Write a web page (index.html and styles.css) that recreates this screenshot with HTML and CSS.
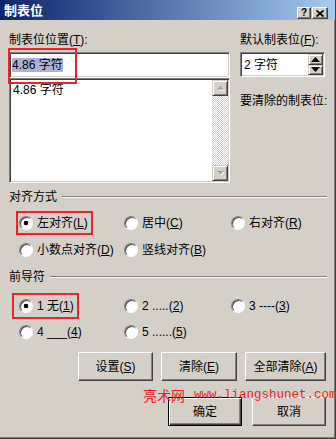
FILE: index.html
```html
<!DOCTYPE html>
<html lang="zh-CN">
<head>
  <meta charset="UTF-8">
  <title>制表位</title>
  <link rel="stylesheet" href="styles.css">
</head>
<body>
  <div class="dialog">
    <div class="titlebar">
      <span class="title">制表位</span>
      <div class="caption">
        <span class="cap-btn help">?</span>
        <span class="cap-btn close">
          <svg width="8" height="7" viewBox="0 0 8 7"><path d="M0.5 0.5 L7.5 6.5 M7.5 0.5 L0.5 6.5" stroke="#000" stroke-width="1.8"/></svg>
        </span>
      </div>
    </div>

    <div class="content">
      <div class="top">
        <div class="col">
          <span class="lbl">制表位位置(<u>T</u>):</span>
          <div class="field tab-pos"><span class="sel">4.86 字符</span></div>
          <div class="listbox">
            <div class="items"><div class="item">4.86 字符</div></div>
            <div class="vscroll">
              <span class="sb-btn"><svg width="9" height="6" viewBox="0 0 9 6"><path d="M4.5 1 L8 4.5 L1 4.5 Z" fill="#fff" transform="translate(1 1)"/><path d="M4.5 1 L8 4.5 L1 4.5 Z" fill="#a0a0a0"/></svg></span>
              <span class="sb-track"></span>
              <span class="sb-btn"><svg width="9" height="6" viewBox="0 0 9 6"><path d="M1 1 L8 1 L4.5 4.5 Z" fill="#fff" transform="translate(1 1)"/><path d="M1 1 L8 1 L4.5 4.5 Z" fill="#a0a0a0"/></svg></span>
            </div>
          </div>
        </div>
        <div class="col">
          <span class="lbl">默认制表位(<u>F</u>):</span>
          <div class="field spin">
            <span class="spin-val">2 字符</span>
            <span class="spin-btns">
              <span class="spin-btn"><svg width="9" height="5" viewBox="0 0 9 5"><path d="M4.5 0 L9 5 L0 5 Z" fill="#000"/></svg></span>
              <span class="spin-btn"><svg width="9" height="5" viewBox="0 0 9 5"><path d="M0 0 L9 0 L4.5 5 Z" fill="#000"/></svg></span>
            </span>
          </div>
          <span class="lbl clear-lbl">要清除的制表位:</span>
        </div>
      </div>

      <div class="group-head first"><span>对齐方式</span></div>
      <div class="radios align">
        <span class="radio checked mark-a">左对齐(<u>L</u>)</span>
        <span class="radio">居中(<u>C</u>)</span>
        <span class="radio">右对齐(<u>R</u>)</span>
        <span class="radio">小数点对齐(<u>D</u>)</span>
        <span class="radio">竖线对齐(<u>B</u>)</span>
      </div>

      <div class="group-head"><span>前导符</span></div>
      <div class="radios leader">
        <span class="radio checked mark-b">1 无(<u>1</u>)</span>
        <span class="radio">2 .....(<u>2</u>)</span>
        <span class="radio">3 ----(<u>3</u>)</span>
        <span class="radio">4 ___(<u>4</u>)</span>
        <span class="radio">5 ......(<u>5</u>)</span>
      </div>

      <div class="btn-row">
        <span class="btn w75">设置(<u>S</u>)</span>
        <span class="btn w76">清除(<u>E</u>)</span>
        <span class="btn w81">全部清除(<u>A</u>)</span>
      </div>
      <div class="btn-row ok-row">
        <span class="btn default">确定</span>
        <span class="btn">取消</span>
      </div>
    </div>

    <div class="watermark"><span class="wm-cn">亮术网</span><span class="wm-url">www.liangshunet.com</span></div>
  </div>
</body>
</html>
```

FILE: styles.css
```css
* { box-sizing: border-box; }
body {
  margin: 0;
  background: #fff;
  font: 12px/14px "Liberation Sans", "Noto Sans CJK SC", sans-serif;
  color: #000;
}
u { text-decoration: underline; text-underline-offset: 1px; }

.dialog {
  position: relative;
  width: 336px;
  height: 439px;
  background: #d4d0c8;
  border-right: 1px solid #404040;
  border-bottom: 1px solid #404040;
  box-shadow: inset -1px -1px #808080;
}

/* title bar */
.titlebar {
  height: 20px;
  display: flex;
  justify-content: space-between;
  padding: 0 7px 0 4px;
  background: linear-gradient(to right, #0a246a, #a6caf0);
}
.title {
  color: #fff;
  font-weight: bold;
  font-size: 13px;
  line-height: 22px;
}
.caption { display: flex; gap: 1px; padding-top: 7px; }
.cap-btn {
  height: 12px;
  display: flex; align-items: center; justify-content: center;
  background: #d4d0c8;
  border: 1px solid; border-color: #fff #404040 #404040 #fff;
  box-shadow: inset -1px -1px #808080;
  font: bold 10px/10px "Liberation Sans", sans-serif;
}
.cap-btn.help { width: 14px; }
.cap-btn.close { width: 16px; }

.content { padding: 13px 8px 0 9px; }

/* top area */
.top {
  display: grid;
  grid-template-columns: 221px 85px;
  column-gap: 10px;
}
.col { display: flex; flex-direction: column; }
.lbl { display: block; height: 14px; white-space: nowrap; }
.field {
  margin-top: 5px;
  background: #fff;
  border: 1px solid; border-color: #808080 #fff #fff #808080;
  box-shadow: inset 1px 1px #404040, inset -1px -1px #d4d0c8;
}
.tab-pos {
  position: relative;
  height: 26px;
  display: flex; align-items: center;
  padding: 0 2px;
}
.tab-pos::after {
  content: "";
  position: absolute;
  left: -2px; top: -5px;
  width: 65px; height: 32px;
  border: 2px solid #e8262a;
}
.sel { background: #aab4d2; }

.listbox {
  height: 105px;
  display: flex;
  padding: 1px;
  background: #fff;
  border: 1px solid; border-color: #808080 #fff #fff #808080;
  box-shadow: inset 1px 1px #404040, inset -1px -1px #d4d0c8;
}
.items { flex: 1; padding: 3px 2px; }
.vscroll { width: 16px; display: flex; flex-direction: column; }
.sb-btn {
  height: 16px;
  display: flex; align-items: center; justify-content: center;
  background: #d4d0c8;
  border: 1px solid; border-color: #d4d0c8 #404040 #404040 #d4d0c8;
  box-shadow: inset 1px 1px #fff, inset -1px -1px #808080;
}
.sb-track {
  flex: 1;
  background: repeating-conic-gradient(#d4d0c8 0 25%, #fff 0 50%) 0 0 / 2px 2px;
}

.spin {
  height: 25px;
  display: flex;
  padding: 1px;
}
.spin-val { flex: 1; display: flex; align-items: center; padding-left: 2px; }
.spin-btns { width: 15px; display: flex; flex-direction: column; }
.spin-btn {
  flex: 1;
  display: flex; align-items: center; justify-content: center;
  background: #d4d0c8;
  border: 1px solid; border-color: #d4d0c8 #404040 #404040 #d4d0c8;
  box-shadow: inset 1px 1px #fff, inset -1px -1px #808080;
}
.clear-lbl { margin-top: 17px; }

/* groups */
.group-head {
  display: flex; align-items: center; gap: 5px;
  height: 14px;
  margin-top: 13px;
}
.group-head.first { margin-top: 7px; }
.group-head::after {
  content: "";
  flex: 1;
  border-top: 1px solid #808080;
  border-bottom: 1px solid #fff;
}
.radios {
  display: grid;
  grid-template-columns: 105px 107px auto;
  row-gap: 13px;
  margin: 12px 0 0 10px;
}
.radios.leader { margin-top: 15px; row-gap: 12px; }
.radio {
  position: relative;
  justify-self: start;
  display: inline-flex; align-items: center;
  height: 14px;
  white-space: pre;
}
.radio::before {
  content: "";
  width: 12px; height: 12px;
  margin-right: 4px;
  border-radius: 50%;
  background: #fff;
  border: 1px solid; border-color: #808080 #fff #fff #808080;
  box-shadow: inset 1px 1px #404040;
}
.radio.checked::before {
  background: radial-gradient(circle, #000 0 2px, #fff 2.6px);
}
.mark-a::after, .mark-b::after {
  content: "";
  position: absolute;
  border: 2px solid #e8262a;
}
.mark-a::after { left: -3px; top: -5px; right: -5px; bottom: -5px; }
.mark-b::after { left: -7px; top: -6px; right: -5px; bottom: -6px; }

/* buttons */
.btn-row {
  display: flex; justify-content: flex-end; gap: 8px;
  margin-top: 13px;
  padding-right: 1px;
}
.btn {
  height: 29px;
  display: flex; align-items: center; justify-content: center;
  background: #d4d0c8;
  border: 1px solid; border-color: #fff #404040 #404040 #fff;
  box-shadow: inset -1px -1px #808080;
}
.w75 { width: 75px; }
.w76 { width: 76px; }
.w81 { width: 81px; }
.ok-row { margin-top: 16px; gap: 10px; }
.ok-row .btn { width: 74px; }
.btn.default {
  border: 1px solid #000;
  box-shadow: inset 1px 1px #fff, inset -1px -1px #404040, inset -2px -2px #808080;
}

.watermark {
  position: absolute;
  left: 143px; top: 386px;
  display: flex; align-items: center;
  white-space: nowrap;
  color: #ee1c1c;
}
.wm-cn { font: 14px/18px "Noto Sans CJK SC", sans-serif; }
.wm-url { font: 12.5px/18px "Liberation Mono", monospace; margin-left: 9px; }
```
